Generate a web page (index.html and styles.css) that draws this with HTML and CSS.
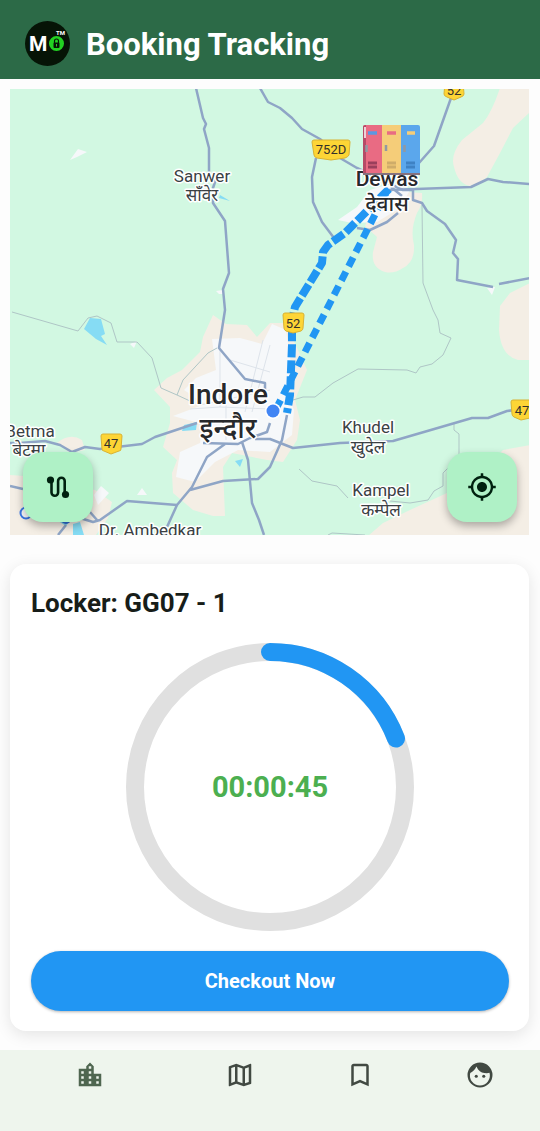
FILE: index.html
```html
<!DOCTYPE html>
<html lang="en">
<head>
<meta charset="utf-8">
<meta name="viewport" content="width=device-width, initial-scale=1">
<title>Booking Tracking</title>
<link rel="stylesheet" href="styles.css">
</head>
<body>
<div class="app">
  <header class="topbar">
    <svg class="logo" viewBox="0 0 45 45" role="img" aria-label="Mo logo">
      <circle cx="22.500" cy="22.500" r="22.500" fill="#061406"/>
      <text class="logo-m" x="4" y="30">M</text>
      <circle cx="31.500" cy="22.500" r="5.500" fill="none" stroke="#22d122" stroke-width="4"/>
      <circle cx="31.500" cy="22.500" r="5.500" fill="#22d122"/>
      <path d="M29.500 22v-2a2 2 0 0 1 4 0v2" fill="none" stroke="#061406" stroke-width="1.200"/>
      <rect x="28.500" y="21.500" width="6" height="5.500" rx="1" fill="#061406"/>
      <path d="M31.500 23v2.500" stroke="#22d122" stroke-width="1"/>
      <text class="logo-tm" x="31" y="14">TM</text>
    </svg>
    <h1 class="title">Booking Tracking</h1>
  </header>

  <main class="content">
    <section class="map" aria-label="Map">
      <svg class="map-art" viewBox="10 89 519 446" preserveAspectRatio="xMidYMid slice">
        <rect x="10" y="89" width="519" height="446" fill="#d2f8e2"/>
        <g fill="#f4eee5">
          <path d="M500 88Q492 112 483 123L462 140Q450 155 454 167Q458 184 470 186Q482 182 487 177L500 153L513 128L530 112V88Z"/>
          <path d="M380 190L422 193Q423 205 417 213Q410 230 414 245Q415 262 403 268Q394 274 385 272Q371 268 373 252L377 237L365 226Z"/>
          <path d="M530 283L510 293L500 306L499 330Q501 356 518 360H530Z"/>
          <path d="M530 445L503 450L470 482L447 493L410 510L383 523L368 536H530Z"/>
          <path d="M213 315L203 337L200 352L182 370L167 378L154 390L170 407V423L163 447L177 460L172 473L173 493L193 510L213 516H225L223 467L232 453L267 460L283 462L297 440L300 420L295 400L307 370L298 350L285 323H270L257 337L247 325L226 324Z"/>
          <path d="M57 443Q70 432 82 440L85 450L70 453ZM10 475L40 477L95 490L112 502L108 518L96 535H10Z"/>
        </g>
        <g fill="#f6f8fa">
          <path d="M338 220L357 207L370 190L392 183L410 190L400 208L377 222L352 223Z"/>
          <path d="M212 339L240 338L262 344L272 324L286 330L292 370L286 390L294 410L292 435L270 452L238 450L215 462L195 482L176 477L180 452L200 443L203 424L173 416L205 404L184 390L196 378L216 370Z"/>
          <path d="M70 160L78 149L87 152L77 157ZM216 291L223 290L223 294L219 294ZM487 288L495 287L492 295ZM137 495L142 488L147 495ZM94 495L101 486L109 493L98 505ZM130 344L137 341L134 348Z"/>
        </g>
        <g fill="#86dcf4">
          <path d="M84 329L90 318L101 319L105 334L101 336L107 345L96 339Z"/>
          <path d="M182 431L184 425L197 422L196 430ZM235 461L243 459L240 467ZM73 524L80 522L84 535H73ZM220 195L230 201L219 198ZM55 519L72 518L66 526Z"/>
        </g>
        <g class="minor">
          <path d="M12 312L78 331L88 318L97 316L111 323L117 342H137L152 358L161 388L177 395L190 401M177 395L183 380L208 353L217 348"/>
          <path d="M422 205L423 283L433 310L438 320L440 333L451 338L443 355L432 364L420 367L416 373L407 370L358 369L333 383L315 397H303L293 400"/>
          <path d="M299 469L312 481L337 486L348 498M390 501L410 503L428 500L434 491L443 486V473L451 465M454 424V430L459 434V455M328 535L332 533L365 535"/>
        </g>
        <g class="street">
          <path d="M220 350V407L190 409M220 407L270 409M226 395V440M245 412L263 340M252 412L270 345M200 405L270 390M230 360L270 372"/>
        </g>
        <g class="road">
          <path d="M196 88L203 118L206 124L204 129L209 148V175L215 182L213 188V203L225 221L229 273L223 289L225 310L219 348L245 379L265 383V398"/>
          <path d="M260 88L268 102L280 108L292 118L302 129L320 139L340 158L357 168L403 190L413 190"/>
          <path d="M316 158L312 177L313 202L322 222L337 242"/>
          <path d="M451 98L434 146L419 163L405 184"/>
          <path d="M389 190L471 187L488 179L503 182L530 184"/>
          <path d="M413 190V200L422 203L427 211L445 224L456 240L453 253L458 259L457 280L493 287M499 284L530 278"/>
          <path d="M357 228L370 230L387 222L398 213M391 187L402 196"/>
          <path d="M10 443H20L45 441L60 445L72 452L85 447L100 449L142 444L155 437L197 423"/>
          <path d="M203 443L238 444L250 438L267 432L270 423M255 439L270 439L293 448L340 443L393 441L472 418H488L507 411L515 410"/>
          <path d="M225 444L207 457L192 487L177 505L167 527M242 442L248 460L252 503L259 520L264 535"/>
          <path d="M287 415L282 440L270 467L258 479L223 481L190 490"/>
          <path d="M10 486L23 489M80 518L93 522L100 520L127 501L177 505M90 512L97 520M58 535L66 525"/>
        </g>
        <circle cx="26" cy="513" r="5.500" fill="#fff" stroke="#3b78e7" stroke-width="2"/>
        <circle cx="66" cy="519" r="5" fill="#2f6fd8"/>
        <g class="place">
          <text x="202" y="182">Sanwer</text><text class="hindi" x="202" y="201">साँवेर</text>
          <text x="368" y="433">Khudel</text><text class="hindi" x="368" y="453">खुदेल</text>
          <text x="381" y="496">Kampel</text><text class="hindi" x="381" y="516">कम्पेल</text>
          <text x="30" y="437">Betma</text><text class="hindi" x="29" y="456">बेटमा</text>
          <text x="150" y="536">Dr. Ambedkar</text>
        </g>
        <g class="route">
          <path class="route-road" d="M389 189L363 215L345 233L328 245L323 252L322 263L295 307L292 320L292 345L291 370L290 395L287 413"/>
          <path class="route-line" d="M276 409L386 193"/>
        </g>
        <g class="place place-town">
          <text x="387" y="186">Dewas</text><text class="hindi" x="387" y="211">देवास</text>
        </g>
        <g class="place place-city">
          <text x="228" y="404">Indore</text><text class="hindi" x="228" y="438">इन्दौर</text>
        </g>
        <g class="shield">
          <path d="M314 140H348Q350 140 350 142L349 155Q348 157 345 158L331 160L317 158Q314 157 314 155L312 142Q312 140 314 140Z"/>
          <path d="M445 82H463L464 94Q464 96 461 97L454 100L447 97Q444 96 444 94Z"/>
          <path d="M285 313H302Q304 313 304 315L303 328Q303 330 301 331L293 333L286 331Q284 330 284 328L283 315Q283 313 285 313Z"/>
          <path d="M103 434H120Q122 434 122 436L121 449Q121 451 119 451L111 454L104 451Q102 451 102 449L101 436Q101 434 103 434Z"/>
          <path d="M513 400H530V418L521 420L514 417Q512 416 512 414L511 402Q511 400 513 400Z"/>
          <text x="331" y="154">752D</text><text x="454" y="95">52</text><text x="293" y="328">52</text><text x="111" y="448">47</text><text x="522" y="415">47</text>
        </g>
        <circle cx="273" cy="411" r="8" fill="#fff"/><circle cx="273" cy="411" r="6.500" fill="#4285f4"/>
        <g>
          <path d="M363 127Q363 125 365 125H382V174H363Z" fill="#e96b83"/>
          <path d="M363 127Q363 125 366 125V174H363Z" fill="#b64b67"/>
          <path d="M382 125H401V174H382Z" fill="#f5cd79"/>
          <path d="M401 125H418Q420 125 420 127V174H401Z" fill="#5ba7ec"/>
          <path d="M363 173H420V175H363Z" fill="#85717e"/>
          <path d="M365 127V138" stroke="#fff" stroke-width="1.500"/>
          <path d="M368 133H377" stroke="#5b97e0" stroke-width="3.500"/>
          <path d="M387 133H396" stroke="#e96b83" stroke-width="3.500"/><path d="M407 133H415" stroke="#f5cd79" stroke-width="3.500"/>
          <path d="M366.500 145V152M386 145V151M404.500 145V152" stroke="#9199a3" stroke-width="2.500"/>
          <path d="M368 163H377M368 167H377" stroke="#9b3f5c" stroke-width="3"/>
          <path d="M387 163H396M387 167H396" stroke="#cfac69" stroke-width="3"/>
          <path d="M406 163H415M406 167H415" stroke="#3e82c4" stroke-width="3"/>
        </g>
      </svg>
      <div class="map-actions">
        <button class="fab" type="button" aria-label="Show route">
          <svg viewBox="0 0 30 30"><path d="M8.500 8V20.500A3.300 3.300 0 0 0 15.100 20.500V9A3.300 3.300 0 0 1 21.700 9V21" fill="none" stroke="#00210f" stroke-width="2.600"/><circle cx="7.500" cy="8" r="3.600"/><circle cx="22.500" cy="22.500" r="3.600"/></svg>
        </button>
        <button class="fab" type="button" aria-label="My location">
          <svg viewBox="0 0 24 24"><path d="M12 8c-2.210 0-4 1.790-4 4s1.790 4 4 4 4-1.790 4-4-1.790-4-4-4zm8.940 3A8.994 8.994 0 0 0 13 3.060V1h-2v2.060A8.994 8.994 0 0 0 3.060 11H1v2h2.060A8.994 8.994 0 0 0 11 20.940V23h2v-2.060A8.994 8.994 0 0 0 20.940 13H23v-2h-2.060zM12 19c-3.870 0-7-3.130-7-7s3.130-7 7-7 7 3.130 7 7-3.130 7-7 7z"/></svg>
        </button>
      </div>
    </section>

    <section class="card">
      <h2 class="locker">Locker: GG07 - 1</h2>
      <div class="timer">
        <svg class="ring" viewBox="0 0 288 288" aria-hidden="true">
          <circle class="ring-track" cx="144" cy="144" r="135"/>
          <path class="ring-value" d="M144 9A135 135 0 0 1 270 95.500"/>
        </svg>
        <time class="time">00:00:45</time>
      </div>
      <button class="checkout" type="button">Checkout Now</button>
    </section>
  </main>

  <nav class="tabs" aria-label="Main">
    <a class="tab tab-active" href="#home" aria-label="Lockers">
      <svg viewBox="0 0 24 24"><path d="M15 11V5l-3-3-3 3v2H3v14h18V11h-6zm-8 8H5v-2h2v2zm0-4H5v-2h2v2zm0-4H5V9h2v2zm6 8h-2v-2h2v2zm0-4h-2v-2h2v2zm0-4h-2V9h2v2zm0-4h-2V5h2v2zm6 12h-2v-2h2v2zm0-4h-2v-2h2v2z"/></svg>
    </a>
    <a class="tab" href="#map" aria-label="Map">
      <svg viewBox="0 0 24 24"><path d="M20.500 3l-.160.030L15 5.100 9 3 3.360 4.900c-.210.070-.360.250-.360.480V20.500c0 .280.220.500.500.500l.160-.030L9 18.900l6 2.100 5.640-1.900c.210-.070.360-.250.360-.480V3.500c0-.280-.220-.500-.500-.500zM10 5.470l4 1.400v11.660l-4-1.400V5.470zm-5 .990l3-1.010v11.700l-3 1.160V6.460zm14 11.080l-3 1.010V6.860l3-1.160v11.840z"/></svg>
    </a>
    <a class="tab" href="#bookings" aria-label="Bookings">
      <svg viewBox="0 0 24 24"><path d="M17 3H7c-1.100 0-2 .900-2 2v16l7-3 7 3V5c0-1.100-.900-2-2-2zm0 15l-5-2.180L7 18V5h10v13z"/></svg>
    </a>
    <a class="tab" href="#profile" aria-label="Profile">
      <svg viewBox="0 0 24 24"><path fill-rule="evenodd" d="M12 2a10 10 0 1 0 0 20a10 10 0 1 0 0-20zM10.500 7.500C12.200 9.700 14.600 10.500 17.500 10.500C18.200 10.500 18.900 10.400 19.600 10.200A8 8 0 1 1 4.200 10.300C6.500 9.300 8.200 7.500 9.100 5.200Z"/><circle cx="9" cy="13" r="1.250"/><circle cx="15" cy="13" r="1.250"/></svg>
    </a>
  </nav>
</div>
</body>
</html>
```
FILE: styles.css
```css
* { box-sizing: border-box; }

body {
  margin: 0;
  background: #fdfdfd;
  color: #171d19;
  font-family: Roboto, "Noto Sans", sans-serif;
}

.app {
  display: flex;
  flex-direction: column;
  min-height: 100vh;
}

.topbar {
  display: flex;
  align-items: center;
  gap: 16px;
  padding: 21px 25px 13px;
  background: #2c6a47;
}

.logo { width: 45px; height: 45px; }
.logo-m { fill: #fff; font: 700 21px Roboto, sans-serif; }
.logo-tm { fill: #fff; font: 700 6px Roboto, sans-serif; }

.title {
  margin: 0;
  padding-top: 2px;
  color: #fff;
  font-size: 31px;
  line-height: 40px;
  font-weight: 700;
}

.content {
  flex: 1;
  display: flex;
  flex-direction: column;
  gap: 29px;
  padding: 10px 11px 18px 10px;
}

.map { position: relative; }
.map-art { display: block; width: 100%; }

.map-actions {
  position: absolute;
  right: 12px;
  bottom: 13px;
  left: 13px;
  display: flex;
  justify-content: space-between;
}

.fab {
  display: grid;
  place-items: center;
  width: 70px;
  height: 70px;
  padding: 0;
  border: 0;
  border-radius: 20px;
  background: #aff1c6;
  box-shadow: 0 4px 8px rgba(0, 0, 0, 0.3);
}
.fab svg { width: 30px; height: 30px; fill: #00210f; }

.minor { fill: none; stroke: #afc6c6; stroke-width: 1; }
.street { fill: none; stroke: #dde3ea; stroke-width: 1; }
.road { fill: none; stroke: #8fa5c6; stroke-width: 2.5; stroke-linejoin: round; }

.place {
  fill: #3a3f44;
  stroke: #fff;
  stroke-width: 3px;
  stroke-linejoin: round;
  paint-order: stroke;
  font-size: 17px;
  text-anchor: middle;
}
.place-town { fill: #27292c; font-size: 21px; font-weight: 500; }
.place-city { fill: #27292c; font-size: 28px; font-weight: 500; }

.route { fill: none; stroke: #2196f3; }
.route-road { stroke-width: 8; stroke-dasharray: 13 3; stroke-linejoin: round; }
.route-line { stroke-width: 7; stroke-dasharray: 10 6; }

.shield path { fill: #fdd535; stroke: #d9b233; stroke-width: 1; }
.shield text { fill: #33312a; font-size: 13px; text-anchor: middle; }

.card {
  display: flex;
  flex-direction: column;
  padding: 20px 20px 20px 21px;
  border-radius: 16px;
  background: #fff;
  box-shadow: 0 4px 16px rgba(0, 0, 0, 0.1);
}

.locker {
  margin: 0;
  font-size: 26px;
  line-height: 38px;
  font-weight: 700;
}

.timer {
  display: grid;
  place-items: center;
  padding: 21px 0 20px;
}
.ring, .time { grid-area: 1 / 1; }
.ring { width: 288px; height: 288px; }
.ring-track { fill: none; stroke: #e0e0e0; stroke-width: 18; }
.ring-value { fill: none; stroke: #2196f3; stroke-width: 18; stroke-linecap: round; }
.time { color: #4caf50; font-size: 29px; font-weight: 700; }

.checkout {
  height: 60px;
  border: 0;
  border-radius: 30px;
  background: #2196f3;
  box-shadow: 0 1px 3px rgba(0, 0, 0, 0.3);
  color: #fff;
  font-family: inherit;
  font-size: 20px;
  font-weight: 700;
}

.tabs {
  display: grid;
  grid-template-columns: 3fr 2fr 2fr 2fr;
  padding: 10px 0 41px;
  background: #eef5ed;
}
.tab { display: grid; place-items: center; }
.tab svg { width: 30px; height: 30px; fill: #414942; }
.tab-active svg { fill: #4f6650; }
```
